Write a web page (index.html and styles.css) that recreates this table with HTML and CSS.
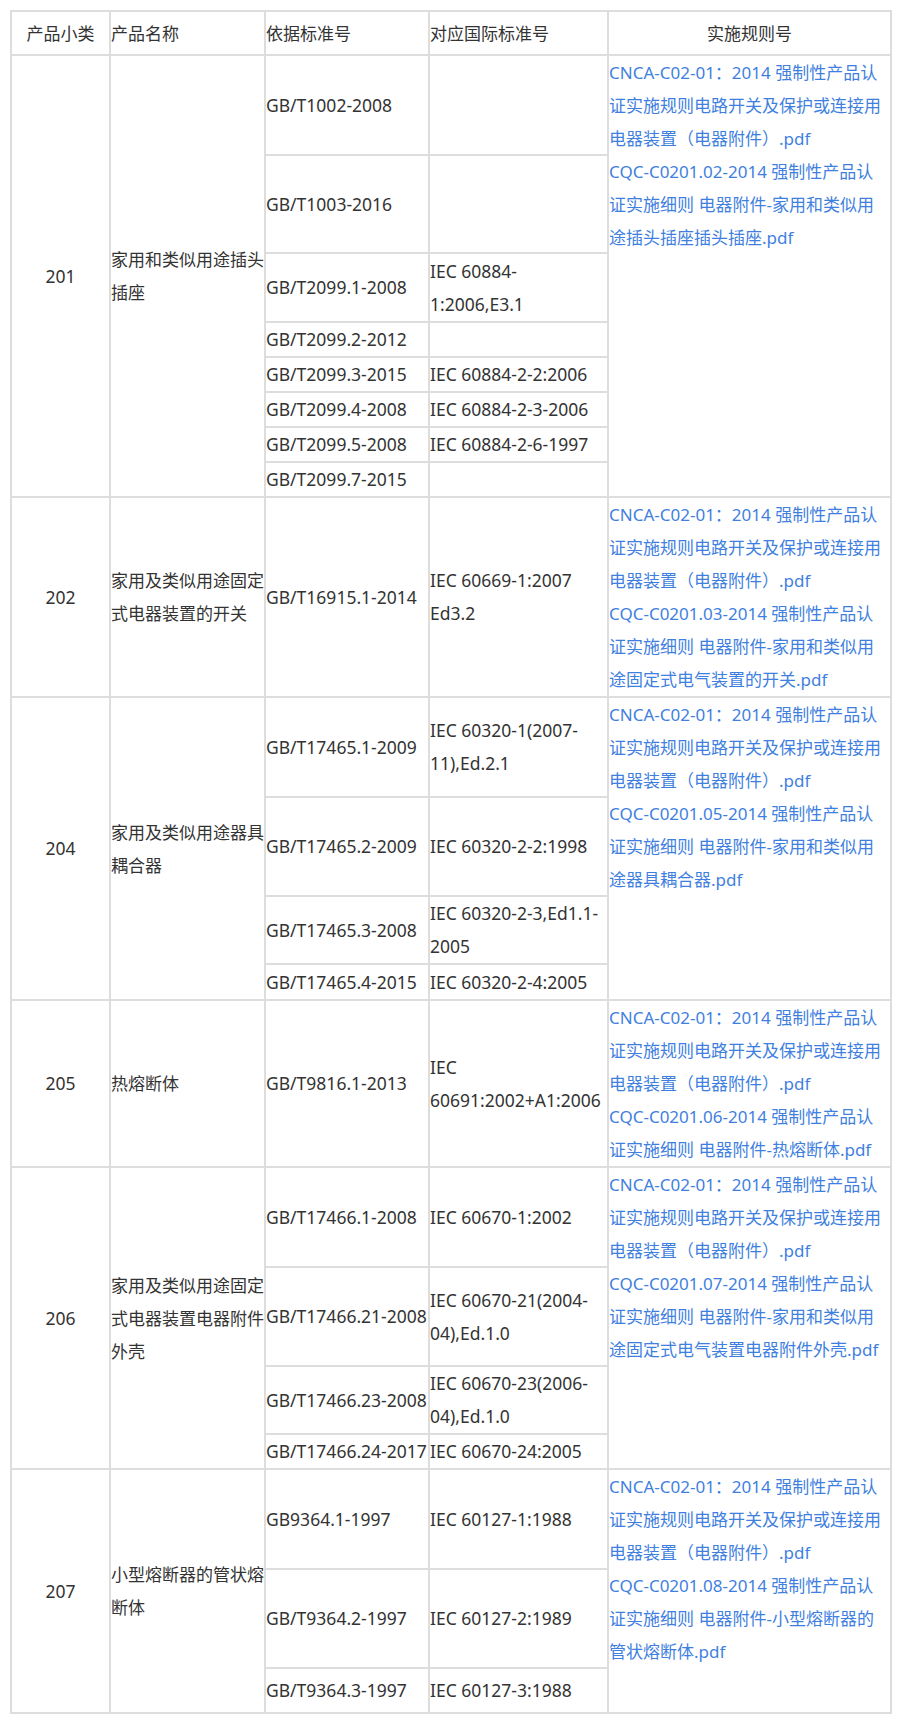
FILE: index.html
```html
<!DOCTYPE html>
<html lang="zh-CN">
<head>
<meta charset="utf-8">
<title>产品标准</title>
<link rel="stylesheet" href="styles.css">
</head>
<body>
<table class="std-table">
  <colgroup>
    <col class="c1"><col class="c2"><col class="c3"><col class="c4"><col class="c5">
  </colgroup>
  <thead>
    <tr class="h44">
      <th class="center">产品小类</th>
      <th>产品名称</th>
      <th>依据标准号</th>
      <th>对应国际标准号</th>
      <th class="center">实施规则号</th>
    </tr>
  </thead>
  <tbody>
    <tr class="h100">
      <td class="num" rowspan="8">201</td>
      <td class="name" rowspan="8">家用和类似用途插头<br>插座</td>
      <td class="code">GB/T1002-2008</td>
      <td class="code"></td>
      <td class="links" rowspan="8"><a href="#">CNCA-C02-01：2014 强制性产品认<br>证实施规则电路开关及保护或连接用<br>电器装置（电器附件）.pdf</a><br><a href="#">CQC-C0201.02-2014 强制性产品认<br>证实施细则 电器附件-家用和类似用<br>途插头插座插头插座.pdf</a></td>
    </tr>
    <tr class="h98"><td class="code">GB/T1003-2016</td><td class="code"></td></tr>
    <tr class="h69"><td class="code">GB/T2099.1-2008</td><td class="code">IEC 60884-<br>1:2006,E3.1</td></tr>
    <tr class="h35"><td class="code">GB/T2099.2-2012</td><td class="code"></td></tr>
    <tr class="h35"><td class="code">GB/T2099.3-2015</td><td class="code">IEC 60884-2-2:2006</td></tr>
    <tr class="h35"><td class="code">GB/T2099.4-2008</td><td class="code">IEC 60884-2-3-2006</td></tr>
    <tr class="h35"><td class="code">GB/T2099.5-2008</td><td class="code">IEC 60884-2-6-1997</td></tr>
    <tr class="h35"><td class="code">GB/T2099.7-2015</td><td class="code"></td></tr>

    <tr class="h200">
      <td class="num">202</td>
      <td class="name">家用及类似用途固定<br>式电器装置的开关</td>
      <td class="code">GB/T16915.1-2014</td>
      <td class="code">IEC 60669-1:2007<br>Ed3.2</td>
      <td class="links"><a href="#">CNCA-C02-01：2014 强制性产品认<br>证实施规则电路开关及保护或连接用<br>电器装置（电器附件）.pdf</a><br><a href="#">CQC-C0201.03-2014 强制性产品认<br>证实施细则 电器附件-家用和类似用<br>途固定式电气装置的开关.pdf</a></td>
    </tr>

    <tr class="h100">
      <td class="num" rowspan="4">204</td>
      <td class="name" rowspan="4">家用及类似用途器具<br>耦合器</td>
      <td class="code">GB/T17465.1-2009</td>
      <td class="code">IEC 60320-1(2007-<br>11),Ed.2.1</td>
      <td class="links" rowspan="4"><a href="#">CNCA-C02-01：2014 强制性产品认<br>证实施规则电路开关及保护或连接用<br>电器装置（电器附件）.pdf</a><br><a href="#">CQC-C0201.05-2014 强制性产品认<br>证实施细则 电器附件-家用和类似用<br>途器具耦合器.pdf</a></td>
    </tr>
    <tr class="h99"><td class="code">GB/T17465.2-2009</td><td class="code">IEC 60320-2-2:1998</td></tr>
    <tr class="h67"><td class="code">GB/T17465.3-2008</td><td class="code">IEC 60320-2-3,Ed1.1-<br>2005</td></tr>
    <tr class="h36"><td class="code">GB/T17465.4-2015</td><td class="code">IEC 60320-2-4:2005</td></tr>

    <tr class="h167">
      <td class="num">205</td>
      <td class="name">热熔断体</td>
      <td class="code">GB/T9816.1-2013</td>
      <td class="code">IEC<br>60691:2002+A1:2006</td>
      <td class="links"><a href="#">CNCA-C02-01：2014 强制性产品认<br>证实施规则电路开关及保护或连接用<br>电器装置（电器附件）.pdf</a><br><a href="#">CQC-C0201.06-2014 强制性产品认<br>证实施细则 电器附件-热熔断体.pdf</a></td>
    </tr>

    <tr class="h100">
      <td class="num" rowspan="4">206</td>
      <td class="name" rowspan="4">家用及类似用途固定<br>式电器装置电器附件<br>外壳</td>
      <td class="code">GB/T17466.1-2008</td>
      <td class="code">IEC 60670-1:2002</td>
      <td class="links" rowspan="4"><a href="#">CNCA-C02-01：2014 强制性产品认<br>证实施规则电路开关及保护或连接用<br>电器装置（电器附件）.pdf</a><br><a href="#">CQC-C0201.07-2014 强制性产品认<br>证实施细则 电器附件-家用和类似用<br>途固定式电气装置电器附件外壳.pdf</a></td>
    </tr>
    <tr class="h99"><td class="code">GB/T17466.21-2008</td><td class="code">IEC 60670-21(2004-<br>04),Ed.1.0</td></tr>
    <tr class="h68"><td class="code">GB/T17466.23-2008</td><td class="code">IEC 60670-23(2006-<br>04),Ed.1.0</td></tr>
    <tr class="h35"><td class="code">GB/T17466.24-2017</td><td class="code">IEC 60670-24:2005</td></tr>

    <tr class="h100">
      <td class="num" rowspan="3">207</td>
      <td class="name" rowspan="3">小型熔断器的管状熔<br>断体</td>
      <td class="code">GB9364.1-1997</td>
      <td class="code">IEC 60127-1:1988</td>
      <td class="links" rowspan="3"><a href="#">CNCA-C02-01：2014 强制性产品认<br>证实施规则电路开关及保护或连接用<br>电器装置（电器附件）.pdf</a><br><a href="#">CQC-C0201.08-2014 强制性产品认<br>证实施细则 电器附件-小型熔断器的<br>管状熔断体.pdf</a></td>
    </tr>
    <tr class="h99"><td class="code">GB/T9364.2-1997</td><td class="code">IEC 60127-2:1989</td></tr>
    <tr class="h45"><td class="code">GB/T9364.3-1997</td><td class="code">IEC 60127-3:1988</td></tr>
  </tbody>
</table>
</body>
</html>
```

FILE: styles.css
```css
html, body {
  background: #ffffff;
}
body {
  margin: 10px 0 0 10px;
  font-family: "Noto Sans", "Noto Sans CJK SC", sans-serif;
  font-size: 17px;
  line-height: 33px;
  color: #333333;
}
.std-table {
  width: 882px;
  table-layout: fixed;
  border-collapse: separate;
  border-spacing: 0;
  border: 1px solid #dddddd;
}
.c1 { width: 99px; }
.c2 { width: 155px; }
.c3 { width: 164px; }
.c4 { width: 179px; }
.c5 { width: 283px; }

.std-table th,
.std-table td {
  box-sizing: border-box;
  border: 1px solid #dddddd;
  padding: 0;
  vertical-align: middle;
  text-align: left;
  white-space: nowrap;
  overflow: visible;
}
.std-table th {
  font-weight: normal;
}
.std-table .center,
.std-table .num {
  text-align: center;
}
.std-table .num,
.std-table .code {
  font-size: 17.5px;
}
.std-table .links {
  vertical-align: top;
}
.links a {
  color: #3f7fe0;
  text-decoration: none;
}

.h35 { height: 35px; }
.h36 { height: 36px; }
.h44 { height: 44px; }
.h45 { height: 45px; }
.h67 { height: 67px; }
.h68 { height: 68px; }
.h69 { height: 69px; }
.h98 { height: 98px; }
.h99 { height: 99px; }
.h100 { height: 100px; }
.h167 { height: 167px; }
.h200 { height: 200px; }
```
